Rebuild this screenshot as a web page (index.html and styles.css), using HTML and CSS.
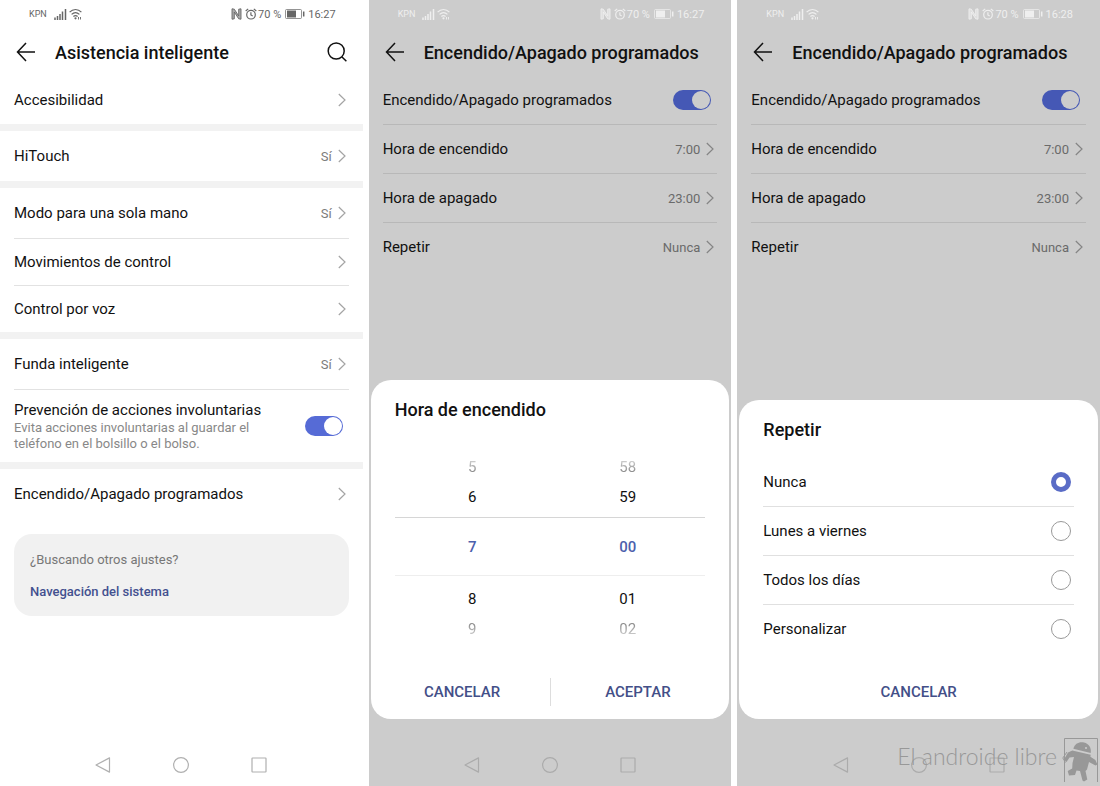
FILE: index.html
```
<!DOCTYPE html>
<html lang="es">
<head>
<meta charset="utf-8">
<title>Asistencia inteligente</title>
<meta name="viewport" content="width=device-width, initial-scale=1">
<link rel="stylesheet" href="styles.css">
</head>
<body>
<svg class="defs" aria-hidden="true">
  <symbol id="signal" viewBox="0 0 13 12"><path d="M1 9.500V12M3.500 8v4M6 6v6M8.500 3.500V12M11.500 1v11" fill="none" stroke="currentColor" stroke-width="1.500"/></symbol>
  <symbol id="wifi" viewBox="0 0 13 12"><g fill="none" stroke="currentColor" stroke-width="1.200"><path d="M.6 4.200C4 .6 9 .6 12.400 4.200M2.600 6.400c2.400-2.300 5.400-2.300 7.800 0M4.400 8.500c1.300-1.200 2.900-1.200 4.200 0"/></g><circle cx="6.500" cy="10.300" r="1.100" fill="currentColor"/><path d="M9.500 9v2.500M11.500 9v2.500" stroke="currentColor" stroke-width=".9"/></symbol>
  <symbol id="nfc" viewBox="0 0 11 12"><path d="M3.300 10.800 1 11.200V.8l2.300.4L7.700 8V1.200L10 .8v10.400l-2.300-.4L3.300 4z" fill="currentColor" fill-opacity=".55" stroke="currentColor" stroke-width=".9" stroke-linejoin="round"/></symbol>
  <symbol id="alarm" viewBox="0 0 12 12"><g fill="none" stroke="currentColor" stroke-width="1.200"><circle cx="6" cy="6.700" r="4.300"/><path d="M.7 3 3.200.9M11.300 3 8.800.9M5.900 4.300v2.600l1.800 1"/></g></symbol>
  <symbol id="battery" viewBox="0 0 20 10"><rect x=".5" y=".5" width="16" height="9" rx="1" fill="none" stroke="currentColor" stroke-opacity=".7"/><path d="M2 1.500h9v7H2z" fill="currentColor"/><path d="M18.700 2.500v5" stroke="currentColor" stroke-width="1.500"/></symbol>
  <symbol id="back" viewBox="0 0 20 20"><path d="M10 1 1.500 10l8.500 9M1.500 10H19" fill="none" stroke="currentColor" stroke-width="1.500"/></symbol>
  <symbol id="search" viewBox="0 0 20 20"><circle cx="9.200" cy="9" r="8" fill="none" stroke="currentColor" stroke-width="1.500"/><path d="m15 15 4.400 4.200" stroke="currentColor" stroke-width="1.500"/></symbol>
  <symbol id="chevron" viewBox="0 0 8 14"><path d="m.8 1 6.200 6-6.200 6" fill="none" stroke="currentColor" stroke-width="1.200"/></symbol>
  <symbol id="nav-back" viewBox="0 0 16 16"><path d="M14.500.9v14.200L1 8z" fill="none" stroke="currentColor" stroke-width="1.200" stroke-linejoin="round"/></symbol>
  <symbol id="nav-home" viewBox="0 0 16 16"><circle cx="8" cy="8" r="7.400" fill="none" stroke="currentColor" stroke-width="1.200"/></symbol>
  <symbol id="nav-recent" viewBox="0 0 16 16"><rect x="1" y="1" width="14" height="14" rx=".5" fill="none" stroke="currentColor" stroke-width="1.200"/></symbol>
</svg>

<main class="screens">
  <section class="phone">
    <div class="status">
      <span class="carrier">KPN</span>
      <svg class="ic-signal"><use href="#signal"/></svg>
      <svg class="ic-wifi"><use href="#wifi"/></svg>
      <span class="status-right">
        <svg class="ic-nfc"><use href="#nfc"/></svg>
        <svg class="ic-alarm"><use href="#alarm"/></svg>
        <span class="charge">70 %</span>
        <svg class="ic-battery"><use href="#battery"/></svg>
        <span>16:27</span>
      </span>
    </div>
    <header class="bar">
      <button class="icon-btn" aria-label="Atrás"><svg><use href="#back"/></svg></button>
      <h1 class="title">Asistencia inteligente</h1>
      <button class="icon-btn" aria-label="Buscar"><svg><use href="#search"/></svg></button>
    </header>
    <div class="group">
      <a class="row first" href="#">Accesibilidad<svg class="chevron"><use href="#chevron"/></svg></a>
    </div>
    <div class="group">
      <a class="row tall" href="#">HiTouch<span class="value">Sí</span><svg class="chevron"><use href="#chevron"/></svg></a>
    </div>
    <div class="group">
      <a class="row tall" href="#">Modo para una sola mano<span class="value">Sí</span><svg class="chevron"><use href="#chevron"/></svg></a>
      <a class="row" href="#">Movimientos de control<svg class="chevron"><use href="#chevron"/></svg></a>
      <a class="row" href="#">Control por voz<svg class="chevron"><use href="#chevron"/></svg></a>
    </div>
    <div class="group">
      <a class="row tall" href="#">Funda inteligente<span class="value">Sí</span><svg class="chevron"><use href="#chevron"/></svg></a>
      <label class="row detail">
        <span class="detail-text">Prevención de acciones involuntarias
          <small class="hint">Evita acciones involuntarias al guardar el teléfono en el bolsillo o el bolso.</small>
        </span>
        <input class="toggle" type="checkbox" role="switch" checked>
      </label>
    </div>
    <div class="group">
      <a class="row tall" href="#">Encendido/Apagado programados<svg class="chevron"><use href="#chevron"/></svg></a>
    </div>
    <aside class="more">
      <p class="more-title">¿Buscando otros ajustes?</p>
      <a class="more-link" href="#">Navegación del sistema</a>
    </aside>
    <nav class="nav">
      <button aria-label="Volver"><svg><use href="#nav-back"/></svg></button>
      <button aria-label="Inicio"><svg><use href="#nav-home"/></svg></button>
      <button aria-label="Recientes"><svg><use href="#nav-recent"/></svg></button>
    </nav>
  </section>

  <section class="phone dimmed">
    <div class="status">
      <span class="carrier">KPN</span>
      <svg class="ic-signal"><use href="#signal"/></svg>
      <svg class="ic-wifi"><use href="#wifi"/></svg>
      <span class="status-right">
        <svg class="ic-nfc"><use href="#nfc"/></svg>
        <svg class="ic-alarm"><use href="#alarm"/></svg>
        <span class="charge">70 %</span>
        <svg class="ic-battery"><use href="#battery"/></svg>
        <span>16:27</span>
      </span>
    </div>
    <header class="bar">
      <button class="icon-btn" aria-label="Atrás"><svg><use href="#back"/></svg></button>
      <h2 class="title">Encendido/Apagado programados</h2>
    </header>
    <div class="group">
      <label class="row first">Encendido/Apagado programados<input class="toggle" type="checkbox" role="switch" checked></label>
      <a class="row" href="#">Hora de encendido<span class="value">7:00</span><svg class="chevron"><use href="#chevron"/></svg></a>
      <a class="row" href="#">Hora de apagado<span class="value">23:00</span><svg class="chevron"><use href="#chevron"/></svg></a>
      <a class="row" href="#">Repetir<span class="value">Nunca</span><svg class="chevron"><use href="#chevron"/></svg></a>
    </div>
    <div class="dialog" role="dialog" aria-labelledby="time-title">
      <h3 class="dialog-title" id="time-title">Hora de encendido</h3>
      <div class="picker">
        <ul class="wheel" aria-label="Hora">
          <li class="far-top">5</li><li class="above">6</li><li class="current">7</li><li class="below">8</li><li class="far-bottom">9</li>
        </ul>
        <ul class="wheel" aria-label="Minutos">
          <li class="far-top">58</li><li class="above">59</li><li class="current">00</li><li class="below">01</li><li class="far-bottom">02</li>
        </ul>
      </div>
      <div class="actions">
        <button class="action">CANCELAR</button>
        <button class="action">ACEPTAR</button>
      </div>
    </div>
    <nav class="nav">
      <button aria-label="Volver"><svg><use href="#nav-back"/></svg></button>
      <button aria-label="Inicio"><svg><use href="#nav-home"/></svg></button>
      <button aria-label="Recientes"><svg><use href="#nav-recent"/></svg></button>
    </nav>
  </section>

  <section class="phone dimmed">
    <div class="status">
      <span class="carrier">KPN</span>
      <svg class="ic-signal"><use href="#signal"/></svg>
      <svg class="ic-wifi"><use href="#wifi"/></svg>
      <span class="status-right">
        <svg class="ic-nfc"><use href="#nfc"/></svg>
        <svg class="ic-alarm"><use href="#alarm"/></svg>
        <span class="charge">70 %</span>
        <svg class="ic-battery"><use href="#battery"/></svg>
        <span>16:28</span>
      </span>
    </div>
    <header class="bar">
      <button class="icon-btn" aria-label="Atrás"><svg><use href="#back"/></svg></button>
      <h2 class="title">Encendido/Apagado programados</h2>
    </header>
    <div class="group">
      <label class="row first">Encendido/Apagado programados<input class="toggle" type="checkbox" role="switch" checked></label>
      <a class="row" href="#">Hora de encendido<span class="value">7:00</span><svg class="chevron"><use href="#chevron"/></svg></a>
      <a class="row" href="#">Hora de apagado<span class="value">23:00</span><svg class="chevron"><use href="#chevron"/></svg></a>
      <a class="row" href="#">Repetir<span class="value">Nunca</span><svg class="chevron"><use href="#chevron"/></svg></a>
    </div>
    <div class="dialog" role="dialog" aria-labelledby="repeat-title">
      <h3 class="dialog-title" id="repeat-title">Repetir</h3>
      <div class="options">
        <label class="option">Nunca<input class="radio" type="radio" name="repeat" checked></label>
        <label class="option">Lunes a viernes<input class="radio" type="radio" name="repeat"></label>
        <label class="option">Todos los días<input class="radio" type="radio" name="repeat"></label>
        <label class="option">Personalizar<input class="radio" type="radio" name="repeat"></label>
      </div>
      <div class="actions">
        <button class="action">CANCELAR</button>
      </div>
    </div>
    <nav class="nav">
      <button aria-label="Volver"><svg><use href="#nav-back"/></svg></button>
      <button aria-label="Inicio"><svg><use href="#nav-home"/></svg></button>
      <button aria-label="Recientes"><svg><use href="#nav-recent"/></svg></button>
    </nav>
    <div class="watermark">
      <span class="watermark-text">El androide libre</span>
      <svg viewBox="0 0 38 46" aria-hidden="true">
        <path d="M2.500 45V1.500H35.500V45" fill="none" stroke="currentColor"/>
        <g fill="currentColor">
          <path d="M11.300 11.700C13 6.500 17 4.500 22 5.500c5 1.200 7.500 5.500 6.700 10.500z"/>
          <path d="m10.300 13.500 18.400 4.300-.3 2 5 3.200 2 4.500-1.900 1-6.500-3.500-2 7.500-1.500 1.500 1.800 8.500-3.300 2-1.500-1-2.500-9.500-3.500-.5-1.500 4.500-6 .5-1.300-4.500 4.500-2.500.3-5.500 1.500-6-4.500.5L4.500 25 2 22.500l4-7z"/>
        </g>
        <circle cx="24" cy="11" r="1" class="eye"/>
        <path d="M5 15 .8 21l2.700 4.500" fill="none" stroke="currentColor"/>
      </svg>
    </div>
  </section>
</main>
</body>
</html>
```
FILE: styles.css
```
* { box-sizing: border-box; }

body {
  margin: 0;
  background: #fff;
  font-family: Roboto, "Liberation Sans", sans-serif;
  font-size: 15px;
  color: #111;
}

button {
  padding: 0;
  border: 0;
  background: none;
  color: inherit;
  font: inherit;
  cursor: pointer;
}

a { color: inherit; text-decoration: none; }
svg { display: block; }
.defs { display: none; }

.screens {
  display: grid;
  grid-template-columns: repeat(3, 1fr);
  gap: 6px;
  min-height: 100vh;
}

.phone {
  --line: #e2e2e2;
  --band: #f2f2f2;
  --status: #666;
  --muted: #7c7c7c;
  --chevron: #a4a4a4;
  --accent: #566bd6;
  --knob: #fff;
  --nav: #b0b0b0;
  position: relative;
  display: flex;
  flex-direction: column;
  background: #fff;
}

.dimmed {
  --line: #b8b8b8;
  --status: #efefef;
  --muted: #6a6a6a;
  --chevron: #858585;
  --accent: #4558b5;
  --knob: #ccc;
  --nav: #ababab;
  background: #ccc;
}

/* Status bar */
.status {
  display: flex;
  align-items: center;
  height: 28px;
  padding: 0 27px 0 29px;
  color: var(--status);
  font-size: 11px;
}
.carrier { font-size: 9px; margin-right: 7px; }
.status-right { display: flex; align-items: center; margin-left: auto; }
.ic-signal { width: 13px; height: 12px; margin-right: 2px; }
.ic-wifi { width: 13px; height: 12px; }
.ic-nfc { width: 11px; height: 12px; margin-right: 3px; }
.ic-alarm { width: 12px; height: 12px; margin-right: 1px; }
.ic-battery { width: 20px; height: 10px; margin: 0 3px 0 4px; }

/* Title bar */
.bar {
  display: flex;
  align-items: center;
  gap: 19px;
  height: 48px;
  padding: 0 16px;
}
.icon-btn svg { width: 20px; height: 20px; }
.title {
  flex: 1;
  margin: 0;
  font-size: 18px;
  font-weight: 500;
  white-space: nowrap;
}

/* Settings rows */
.group + .group { border-top: 7px solid var(--band); }
.row {
  display: flex;
  align-items: center;
  height: 47px;
  margin: 0 14px;
}
.row + .row { border-top: 1px solid var(--line); }
.first { height: 48px; }
.tall { height: 50px; }
.dimmed .row + .row { height: 49px; }
.row.detail { height: 73px; }
.value { margin-left: auto; color: var(--muted); font-size: 13px; }
.chevron {
  width: 8px;
  height: 14px;
  margin: 0 3px 0 auto;
  color: var(--chevron);
}
.value + .chevron { margin-left: 6px; }
.detail-text { flex: 1; line-height: 20px; }
.hint {
  display: block;
  max-width: 250px;
  color: #888;
  font-size: 13px;
  line-height: 16px;
}

.toggle {
  appearance: none;
  width: 38px;
  height: 20px;
  margin: 0 6px 0 auto;
  padding: 1px;
  border-radius: 10px;
  background: var(--accent);
}
.toggle::before {
  content: "";
  display: block;
  width: 18px;
  height: 18px;
  margin-left: auto;
  border-radius: 50%;
  background: var(--knob);
}

.more {
  margin: 15px 14px 0;
  padding: 17px 16px 15px;
  border-radius: 18px;
  background: #f1f1f1;
  font-size: 13px;
  line-height: 18px;
}
.more-title { margin: 0 0 14px; color: #777; }
.more-link { display: block; color: #43508f; font-weight: 500; }

/* Navigation keys */
.nav {
  display: flex;
  justify-content: center;
  gap: 62px;
  margin-top: auto;
  padding: 13px 0;
  color: var(--nav);
}
.nav svg { width: 16px; height: 16px; }

/* Dialogs */
.dialog {
  margin: auto 2px 25px;
  padding: 18px 0 13px;
  border-radius: 20px;
  background: #fff;
}
.dialog + .nav { margin-top: 0; }
.dialog-title {
  margin: 0 24px;
  font-size: 18px;
  font-weight: 500;
  line-height: 24px;
}
.picker {
  display: grid;
  grid-template-columns: 1fr 1fr;
  margin: 30px 24px 34px;
  text-align: center;
}
.wheel { margin: 0; padding: 0; list-style: none; line-height: 30px; }
.above { padding-bottom: 5px; }
.current {
  padding: 14px 0 13px;
  border-top: 1px solid #d6d6d6;
  border-bottom: 1px solid #eee;
  color: #4c60ac;
  font-weight: 500;
}
.below { padding-top: 8px; }
.far-top, .far-bottom { color: #888; }
.far-top { mask-image: linear-gradient(to bottom, transparent, #000 70%); }
.far-bottom { mask-image: linear-gradient(to top, transparent, #000 70%); }

.options { margin: 15px 24px 25px; }
.option {
  display: flex;
  align-items: center;
  justify-content: space-between;
  height: 49px;
}
.option + .option { border-top: 1px solid #e0e0e0; }
.radio {
  appearance: none;
  width: 20px;
  height: 20px;
  margin: 0 3px 0 0;
  border: 1px solid #999;
  border-radius: 50%;
}
.radio:checked { border: 5px solid #5a6cc6; }

.actions { display: flex; padding: 0 4px; }
.action {
  flex: 1;
  height: 28px;
  color: #434f88;
  font-weight: 500;
}
.action + .action { border-left: 1px solid #ddd; }

.watermark {
  position: absolute;
  right: 0;
  bottom: 3px;
  display: flex;
  align-items: center;
  gap: 5px;
  color: #989898;
  font-family: Lato, sans-serif;
  font-size: 23px;
  font-weight: 300;
  line-height: 36px;
  white-space: nowrap;
}
.watermark-text { padding-bottom: 8px; }
.watermark svg { width: 38px; height: 46px; }
.eye { fill: #ccc; }
```
